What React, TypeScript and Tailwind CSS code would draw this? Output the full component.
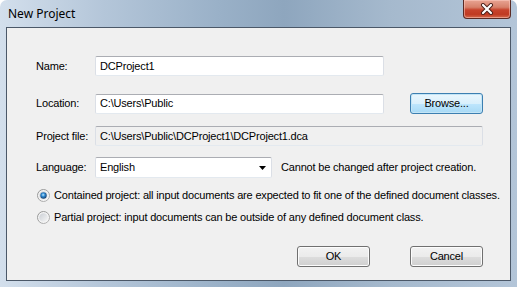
import React from "react";

const uiFont = { fontFamily: '"Liberation Sans", Arial, sans-serif' };

/**
 * Windows 7 style text box.
 */
const TextBox = ({ value, width, readOnly }: { value: string; width?: string; readOnly?: boolean }) => {
  return (
    <div
      className={`${width ?? "flex-1"} h-[20px] flex items-center pl-[4px] rounded-[2px] border border-[#abadb3] border-l-[#dbdfe6] border-r-[#dbdfe6] border-b-[#e3e9ef] ${
        readOnly ? "bg-[#f0f0f0]" : "bg-white"
      } text-black`}
    >
      {value}
    </div>
  );
};

/**
 * Standard push button, optionally with the blue focus glow.
 */
const PushButton = ({ label, focused }: { label: string; focused?: boolean }) => {
  return (
    <div
      className={`w-[73px] h-[21px] rounded-[3px] border flex items-center justify-center text-black ${
        focused
          ? "border-[#3c7fb1] bg-[linear-gradient(#eaf6fd_0%,#d9f0fc_50%,#bee6fd_51%,#a7d9f5_100%)] shadow-[inset_0_0_0_1px_#c4e5f6]"
          : "border-[#707070] bg-[linear-gradient(#f2f2f2_0%,#ebebeb_50%,#dddddd_51%,#cfcfcf_100%)] shadow-[inset_0_0_0_1px_#fcfcfc]"
      }`}
    >
      {label}
    </div>
  );
};

/**
 * Radio button glyph, drawn as SVG.
 */
const Radio = ({ checked }: { checked?: boolean }) => {
  return (
    <svg width="13" height="13" viewBox="0 0 13 13" className="shrink-0">
      <defs>
        <linearGradient id="ring" x1="0" y1="0" x2="1" y2="1">
          <stop offset="0" stopColor="#8e8f8f" />
          <stop offset="1" stopColor="#b8b8b8" />
        </linearGradient>
        <linearGradient id="well" x1="0" y1="0" x2="1" y2="1">
          <stop offset="0" stopColor="#cbcfd5" />
          <stop offset="1" stopColor="#f6f6f6" />
        </linearGradient>
        <radialGradient id="dot" cx="0.45" cy="0.4" r="0.6">
          <stop offset="0" stopColor="#c0ecff" />
          <stop offset="0.45" stopColor="#2f88d0" />
          <stop offset="1" stopColor="#143e6c" />
        </radialGradient>
      </defs>
      <circle cx="6.5" cy="6.5" r="6" fill="#f4f4f4" stroke="url(#ring)" strokeWidth="1" />
      <circle cx="6.5" cy="6.5" r="4.3" fill="url(#well)" />
      {checked && <circle cx="6.5" cy="6.5" r="3.2" fill="url(#dot)" />}
    </svg>
  );
};

const App = (): React.JSX.Element => {
  return (
    <div className="w-[517px] h-[287px] flex flex-col rounded-t-[7px] overflow-hidden bg-[linear-gradient(90deg,#d3dfec_0%,#b4c6d9_20%,#9ab1c8_42%,#8ea6be_55%,#a5b9cd_75%,#b3c5d8_100%)]">
      {/* Title bar. */}
      <div className="h-[27px] shrink-0 flex items-start justify-between">
        <div className="pl-[8px] pt-[6px] text-[12px] leading-[16px] text-black" style={{ fontFamily: '"Noto Sans", "Open Sans", sans-serif' }}>
          New Project
        </div>
        <div className="mr-[6px] w-[48px] h-[19px] rounded-b-[4px] border border-t-0 border-[#5a2a24] bg-[linear-gradient(#e8a493_0%,#d7816b_40%,#c7432c_55%,#c03a22_80%,#d46a4d_100%)] flex items-center justify-center shadow-[inset_0_0_0_1px_rgba(255,210,200,0.5)]">
          <svg width="14" height="12" viewBox="0 0 14 12">
            <path d="M3 2 L11 10 M11 2 L3 10" stroke="#4a1e18" strokeWidth="4" strokeLinecap="round" />
            <path d="M3 2 L11 10 M11 2 L3 10" stroke="#ffffff" strokeWidth="2.2" strokeLinecap="round" />
          </svg>
        </div>
      </div>

      {/* Client area. */}
      <div
        className="mx-[6px] mb-[6px] flex-1 border border-[#4b5868] bg-[#f0f0f0] flex flex-col pl-[29px] pr-[27px] text-[11px] leading-[13px] tracking-[-0.18px] text-black whitespace-nowrap"
        style={uiFont}
      >
        <div className="mt-[28px] flex items-center">
          <div className="w-[59px]">Name:</div>
          <TextBox value="DCProject1" width="w-[289px]" />
        </div>

        <div className="mt-[17px] flex items-center">
          <div className="w-[59px]">Location:</div>
          <TextBox value="C:\Users\Public" width="w-[289px]" />
          <div className="ml-auto">
            <PushButton label="Browse..." focused />
          </div>
        </div>

        <div className="mt-[12px] flex items-center">
          <div className="w-[59px]">Project file:</div>
          <TextBox value="C:\Users\Public\DCProject1\DCProject1.dca" readOnly />
        </div>

        <div className="mt-[11px] flex items-center">
          <div className="w-[59px]">Language:</div>
          <div className="w-[177px] h-[21px] flex items-center justify-between pl-[4px] pr-[5px] rounded-[2px] border border-[#abadb3] border-l-[#dbdfe6] border-r-[#dbdfe6] border-b-[#e3e9ef] bg-white">
            <span>English</span>
            <svg width="7" height="4" viewBox="0 0 7 4">
              <path d="M0 0 H7 L3.5 4 Z" fill="#000" />
            </svg>
          </div>
          <div className="ml-[9px]">Cannot be changed after project creation.</div>
        </div>

        <div className="mt-[11px] flex items-center gap-[4px] pl-[1px]">
          <Radio checked />
          <span>Contained project: all input documents are expected to fit one of the defined document classes.</span>
        </div>

        <div className="mt-[9px] flex items-center gap-[4px] pl-[1px]">
          <Radio />
          <span>Partial project: input documents can be outside of any defined document class.</span>
        </div>

        <div className="mt-[22px] flex justify-end gap-[40px]">
          <PushButton label="OK" />
          <PushButton label="Cancel" />
        </div>
      </div>
    </div>
  );
};

export default App;
